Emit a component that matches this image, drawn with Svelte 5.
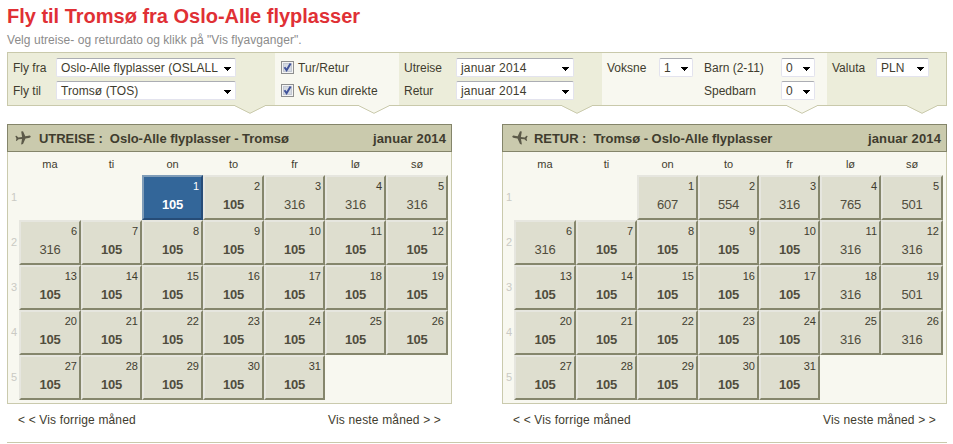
<script lang="ts">
  type Trip = {
    kind: string;
    route: string;
    back: boolean;
    selected: number;
    prices: number[];
  };

  const weekdays = ["ma", "ti", "on", "to", "fr", "lø", "sø"];
  // 1 January 2014 falls on a Wednesday
  const offset = 2;

  const fill = (from: number[]): number[] => [
    ...from,
    ...Array(31 - from.length).fill(105),
  ];

  let trips: Trip[] = [
    {
      kind: "UTREISE :",
      route: "Oslo-Alle flyplasser - Tromsø",
      back: false,
      selected: 1,
      prices: fill([105, 105, 316, 316, 316, 316]),
    },
    {
      kind: "RETUR :",
      route: "Tromsø - Oslo-Alle flyplasser",
      back: true,
      selected: 0,
      prices: fill([
        607, 554, 316, 765, 501, 316, 105, 105, 105, 105, 316, 316, 105, 105,
        105, 105, 105, 316, 501, 105, 105, 105, 105, 105, 316, 316,
      ]),
    },
  ];

  const getWeeks = (prices: number[]) =>
    [0, 1, 2, 3, 4].map((w) =>
      weekdays.map((_, d) => {
        const day = w * 7 + d + 1 - offset;
        return day > 0 && day <= 31 ? { day, price: prices[day - 1] } : null;
      })
    );
</script>

{#snippet select(text: string, size: string)}
  <button class="select {size}">
    <span>{text}</span>
    <svg class="caret" width="7" height="4" viewBox="0 0 7 4">
      <path d="M0 0h7v1H6v1H5v1H4v1H3V3H2V2H1V1H0z" />
    </svg>
  </button>
{/snippet}

{#snippet check(text: string)}
  <label class="check">
    <svg width="13" height="13" viewBox="0 0 13 13">
      <rect x=".5" y=".5" width="12" height="12" fill="#f4f4f4" stroke="#8e8f8f" />
      <rect x="2.5" y="2.5" width="8" height="8" fill="#d5dae2" stroke="#c3c8d2" />
      <path d="M3.5 6.2 5.6 9.2 9.6 2.6" fill="none" stroke="#41539a" stroke-width="2" />
    </svg>
    <span>{text}</span>
  </label>
{/snippet}

{#snippet arrow()}
  <svg class="arrow" width="30" height="9" viewBox="0 0 30 9">
    <path class="arrow-fill" d="M0 0h30v1L15 8.5 0 1z" />
    <path class="arrow-line" d="M0 .8 15 8.3 30 .8" />
  </svg>
{/snippet}

<main>
  <h1>Fly til Tromsø fra Oslo-Alle flyplasser</h1>
  <p class="intro">Velg utreise- og returdato og klikk på "Vis flyavganger".</p>

  <div class="filters">
    <div class="group places">
      <span>Fly fra</span>{@render select("Oslo-Alle flyplasser (OSLALL", "wide")}
      <span>Fly til</span>{@render select("Tromsø (TOS)", "wide")}
      {@render arrow()}
    </div>
    <div class="group light options">
      {@render check("Tur/Retur")}
      {@render check("Vis kun direkte")}
      {@render arrow()}
    </div>
    <div class="group dates">
      <span>Utreise</span>{@render select("januar 2014", "month")}
      <span>Retur</span>{@render select("januar 2014", "month")}
      {@render arrow()}
    </div>
    <div class="group light people">
      <span>Voksne</span>{@render select("1", "count")}
      <span class="child">Barn (2-11)</span>{@render select("0", "count")}
      <span class="child infant">Spedbarn</span>{@render select("0", "count")}
      {@render arrow()}
    </div>
    <div class="group currency">
      <span>Valuta</span>{@render select("PLN", "code")}
      {@render arrow()}
    </div>
  </div>

  <div class="calendars">
    {#each trips as trip}
      <section>
        <div class="title">
          <svg class={trip.back ? "plane back" : "plane"} width="16" height="14" viewBox="0 0 16 14">
            <path
              d="M15.700 5.200c-.3-.6-1.300-.7-2.200-.5l-3.200.6L8 .3 6.200.6l.9 5.300-3.800.6L1.500 4.800.3 5l1.100 2.400-.5 2.500 1-.1 1.700-1.500 3.400-.2-.9 5.300 1.900-.3 2.500-5.500 3.200-.7c1-.2 2.100-.7 2-1.700z"
            />
          </svg>
          <span class="kind">{trip.kind}</span>
          <span class="route">{trip.route}</span>
          <span class="when">januar 2014</span>
        </div>
        <div class="body">
          <div class="row weekdays">
            <span></span>
            {#each weekdays as name}
              <span>{name}</span>
            {/each}
          </div>
          {#each getWeeks(trip.prices) as week, i}
            <div class="row week">
              <span class="week-no">{i + 1}</span>
              {#each week as cell}
                {#if cell}
                  <button
                    class="day"
                    class:low={cell.price === 105}
                    class:selected={cell.day === trip.selected}
                    on:click={() => (trip.selected = cell.day)}
                  >
                    <span class="date">{cell.day}</span>
                    <span class="price">{cell.price}</span>
                  </button>
                {:else}
                  <span></span>
                {/if}
              {/each}
            </div>
          {/each}
        </div>
        <div class="links">
          <span>&lt; &lt; Vis forrige måned</span>
          <span>Vis neste måned &gt; &gt;</span>
        </div>
      </section>
    {/each}
  </div>
</main>

<style>
  :global(body) {
    margin: 0;
    background: #fff;
  }
  main {
    box-sizing: border-box;
    width: 953px;
    height: 444px;
    padding: 4px 6px 0 7px;
    overflow: hidden;
    font-family: "Liberation Sans", Arial, sans-serif;
    font-size: 12px;
    color: #3f3c2e;
  }
  h1 {
    margin: 0;
    font-size: 20px;
    line-height: 24px;
    letter-spacing: -0.01px;
    color: #e03035;
    white-space: nowrap;
  }
  .intro {
    margin: 5px 0 4px;
    line-height: 15px;
    letter-spacing: 0.05px;
    color: #8b8b8b;
  }
  button {
    margin: 0;
    padding: 0;
    font: inherit;
    color: inherit;
  }
  .filters {
    box-sizing: border-box;
    display: flex;
    width: 940px;
    height: 54px;
    border: 1px solid #c9c9ab;
    background: #ecedda;
  }
  .group {
    --fill: #ecedda;
    position: relative;
    box-sizing: border-box;
    display: grid;
    grid-auto-rows: 19px;
    row-gap: 4px;
    align-items: center;
    align-content: start;
    padding-top: 5px;
    background: var(--fill);
    white-space: nowrap;
  }
  .light {
    --fill: #f8f8f0;
  }
  .places {
    width: 267px;
    grid-template-columns: 43px 180px;
    padding-left: 5px;
  }
  .options {
    width: 124px;
    padding-left: 6px;
    letter-spacing: 0.08px;
  }
  .dates {
    width: 203px;
    grid-template-columns: 52px 118px;
    padding-left: 5px;
  }
  .people {
    width: 225px;
    grid-template-columns: 52px 34px 11px 77px 34px;
    padding-left: 5px;
  }
  .child {
    grid-column: 4;
  }
  .currency {
    flex: 1;
    grid-template-columns: 44px 53px;
    padding-left: 5px;
  }
  .select {
    box-sizing: border-box;
    display: flex;
    align-items: center;
    justify-content: space-between;
    height: 19px;
    padding: 0 4px;
    border: 1px solid #e3e3ee;
    border-top-color: #abadb3;
    border-radius: 2px;
    background: #fff;
    letter-spacing: 0.06px;
    text-align: left;
  }
  .month {
    letter-spacing: 0.2px;
  }
  .caret {
    margin-top: 2px;
    fill: #000;
  }
  .check {
    display: flex;
    align-items: center;
    gap: 4px;
  }
  .arrow {
    position: absolute;
    top: 52px;
    right: 10px;
  }
  .currency .arrow {
    right: 9px;
  }
  .arrow-fill {
    fill: var(--fill);
  }
  .arrow-line {
    fill: none;
    stroke: #c9c9ab;
  }
  .calendars {
    display: flex;
    justify-content: space-between;
    width: 940px;
    margin-top: 18px;
    padding-bottom: 13px;
    border-bottom: 1px solid #c9c9ab;
  }
  section {
    width: 445px;
  }
  .title {
    box-sizing: border-box;
    display: flex;
    align-items: center;
    height: 28px;
    padding: 0 5px 0 7px;
    border: 1px solid #84856a;
    background: #cacaad;
    font-size: 13px;
    font-weight: bold;
    white-space: nowrap;
  }
  .plane {
    margin: 0 8px 1px 0;
    fill: #5c5a49;
  }
  .back {
    margin: 0 6px 1px 2px;
    transform: scaleX(-1);
  }
  .kind {
    margin-right: 7px;
    letter-spacing: -0.05px;
  }
  .route {
    letter-spacing: -0.03px;
  }
  .when {
    margin-left: auto;
    letter-spacing: 0.13px;
  }
  .body {
    box-sizing: border-box;
    height: 252px;
    border: 1px solid #cacaad;
    border-top: 0;
    background: #f8f8f0;
  }
  .row {
    display: grid;
    grid-template-columns: 11px 62px repeat(5, 61px) 62px;
  }
  .weekdays {
    height: 23px;
    font-size: 11px;
    line-height: 24px;
    text-align: center;
  }
  .week {
    height: 45px;
  }
  .week-no {
    padding-left: 3px;
    font-size: 11px;
    line-height: 44px;
    color: #cacac4;
  }
  .day {
    box-sizing: border-box;
    display: flex;
    flex-direction: column;
    height: 45px;
    border: 2px solid;
    border-color: #e6e6df #85866c #85866c #e6e6df;
    background: #dedecf;
    color: #504d3d;
  }
  .date {
    align-self: flex-end;
    padding: 3px 2px 0 0;
    font-size: 11px;
    line-height: 13px;
    color: #3f3c2e;
  }
  .price {
    align-self: center;
    padding-top: 4px;
    font-size: 13px;
    line-height: 16px;
    letter-spacing: -0.2px;
  }
  .low {
    font-weight: bold;
  }
  .low .date {
    font-weight: normal;
  }
  .selected {
    border-color: #809db8 #264c77 #264c77 #809db8;
    background: #336699;
    color: #fff;
  }
  .selected .date {
    color: #fff;
  }
  .links {
    display: flex;
    justify-content: space-between;
    padding: 8px 11px 0;
    line-height: 17px;
    letter-spacing: 0.16px;
  }
</style>
